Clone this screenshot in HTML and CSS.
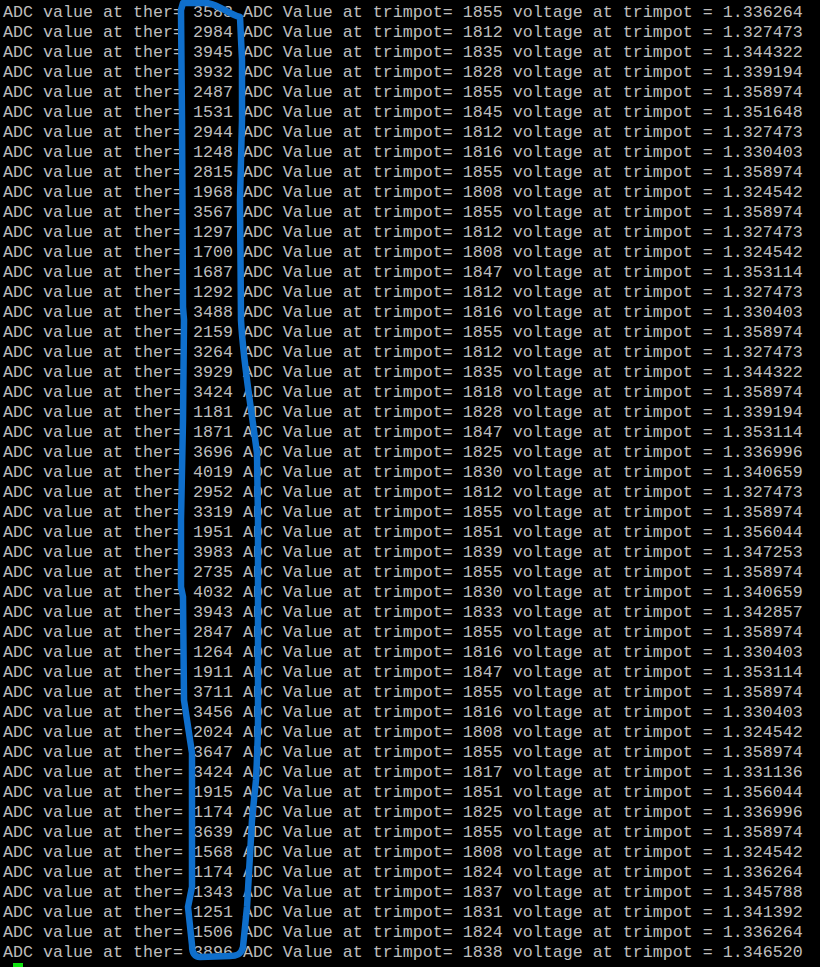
FILE: index.html
```html
<!DOCTYPE html>
<html>
<head>
<meta charset="utf-8">
<title>Terminal</title>
<link rel="stylesheet" href="styles.css">
</head>
<body>
<div class="screen">
<pre class="term">ADC value at ther= 3583 ADC Value at trimpot= 1855 voltage at trimpot = 1.336264
ADC value at ther= 2984 ADC Value at trimpot= 1812 voltage at trimpot = 1.327473
ADC value at ther= 3945 ADC Value at trimpot= 1835 voltage at trimpot = 1.344322
ADC value at ther= 3932 ADC Value at trimpot= 1828 voltage at trimpot = 1.339194
ADC value at ther= 2487 ADC Value at trimpot= 1855 voltage at trimpot = 1.358974
ADC value at ther= 1531 ADC Value at trimpot= 1845 voltage at trimpot = 1.351648
ADC value at ther= 2944 ADC Value at trimpot= 1812 voltage at trimpot = 1.327473
ADC value at ther= 1248 ADC Value at trimpot= 1816 voltage at trimpot = 1.330403
ADC value at ther= 2815 ADC Value at trimpot= 1855 voltage at trimpot = 1.358974
ADC value at ther= 1968 ADC Value at trimpot= 1808 voltage at trimpot = 1.324542
ADC value at ther= 3567 ADC Value at trimpot= 1855 voltage at trimpot = 1.358974
ADC value at ther= 1297 ADC Value at trimpot= 1812 voltage at trimpot = 1.327473
ADC value at ther= 1700 ADC Value at trimpot= 1808 voltage at trimpot = 1.324542
ADC value at ther= 1687 ADC Value at trimpot= 1847 voltage at trimpot = 1.353114
ADC value at ther= 1292 ADC Value at trimpot= 1812 voltage at trimpot = 1.327473
ADC value at ther= 3488 ADC Value at trimpot= 1816 voltage at trimpot = 1.330403
ADC value at ther= 2159 ADC Value at trimpot= 1855 voltage at trimpot = 1.358974
ADC value at ther= 3264 ADC Value at trimpot= 1812 voltage at trimpot = 1.327473
ADC value at ther= 3929 ADC Value at trimpot= 1835 voltage at trimpot = 1.344322
ADC value at ther= 3424 ADC Value at trimpot= 1818 voltage at trimpot = 1.358974
ADC value at ther= 1181 ADC Value at trimpot= 1828 voltage at trimpot = 1.339194
ADC value at ther= 1871 ADC Value at trimpot= 1847 voltage at trimpot = 1.353114
ADC value at ther= 3696 ADC Value at trimpot= 1825 voltage at trimpot = 1.336996
ADC value at ther= 4019 ADC Value at trimpot= 1830 voltage at trimpot = 1.340659
ADC value at ther= 2952 ADC Value at trimpot= 1812 voltage at trimpot = 1.327473
ADC value at ther= 3319 ADC Value at trimpot= 1855 voltage at trimpot = 1.358974
ADC value at ther= 1951 ADC Value at trimpot= 1851 voltage at trimpot = 1.356044
ADC value at ther= 3983 ADC Value at trimpot= 1839 voltage at trimpot = 1.347253
ADC value at ther= 2735 ADC Value at trimpot= 1855 voltage at trimpot = 1.358974
ADC value at ther= 4032 ADC Value at trimpot= 1830 voltage at trimpot = 1.340659
ADC value at ther= 3943 ADC Value at trimpot= 1833 voltage at trimpot = 1.342857
ADC value at ther= 2847 ADC Value at trimpot= 1855 voltage at trimpot = 1.358974
ADC value at ther= 1264 ADC Value at trimpot= 1816 voltage at trimpot = 1.330403
ADC value at ther= 1911 ADC Value at trimpot= 1847 voltage at trimpot = 1.353114
ADC value at ther= 3711 ADC Value at trimpot= 1855 voltage at trimpot = 1.358974
ADC value at ther= 3456 ADC Value at trimpot= 1816 voltage at trimpot = 1.330403
ADC value at ther= 2024 ADC Value at trimpot= 1808 voltage at trimpot = 1.324542
ADC value at ther= 3647 ADC Value at trimpot= 1855 voltage at trimpot = 1.358974
ADC value at ther= 3424 ADC Value at trimpot= 1817 voltage at trimpot = 1.331136
ADC value at ther= 1915 ADC Value at trimpot= 1851 voltage at trimpot = 1.356044
ADC value at ther= 1174 ADC Value at trimpot= 1825 voltage at trimpot = 1.336996
ADC value at ther= 3639 ADC Value at trimpot= 1855 voltage at trimpot = 1.358974
ADC value at ther= 1568 ADC Value at trimpot= 1808 voltage at trimpot = 1.324542
ADC value at ther= 1174 ADC Value at trimpot= 1824 voltage at trimpot = 1.336264
ADC value at ther= 1343 ADC Value at trimpot= 1837 voltage at trimpot = 1.345788
ADC value at ther= 1251 ADC Value at trimpot= 1831 voltage at trimpot = 1.341392
ADC value at ther= 1506 ADC Value at trimpot= 1824 voltage at trimpot = 1.336264
ADC value at ther= 3896 ADC Value at trimpot= 1838 voltage at trimpot = 1.346520</pre>
<div class="prompt"><span class="cursor"></span></div>
<svg class="scribble" width="820" height="967" viewBox="0 0 820 967" aria-hidden="true">
<path d="M183,3 L207,3 C220,5 228,14 240,17 L242,60 L242,120 L240,200 L241,320 C243,360 250,400 257,453 L258,520 L258,720 C258,740 257,760 256,780 L252,820 L247,907 L243,947 C241,955 236,956 230,956 L200,957 C193,957 192,950 192,945 L188,907 L192,887 L192,753 L187,720 L184,700 L183,597 L181,587 L181,520 L183,420 L184,320 L183,307 L182,120 L181,10 Z"/>
</svg>
</div>
</body>
</html>
```

FILE: styles.css
```css
html, body {
  margin: 0;
  padding: 0;
  background: #000;
  height: 100%;
  overflow: hidden;
}

.screen {
  position: relative;
  width: 820px;
  height: 967px;
  overflow: hidden;
  background: #000;
}

.term {
  margin: 0;
  padding: 3px 0 0 3px;
  font-family: "Liberation Mono", "Courier New", monospace;
  font-size: 16.667px;
  line-height: 20px;
  color: #bdbdbd;
  white-space: pre;
}

.prompt {
  display: flex;
  height: 4px;
  padding-left: 13px;
}

.cursor {
  display: block;
  width: 10px;
  height: 4px;
  background: #10e010;
}

.scribble {
  position: absolute;
  left: 0;
  top: 0;
  pointer-events: none;
}

.scribble path {
  fill: none;
  stroke: #0f6fcc;
  stroke-width: 6.5;
  stroke-linejoin: round;
  stroke-linecap: round;
}
```
